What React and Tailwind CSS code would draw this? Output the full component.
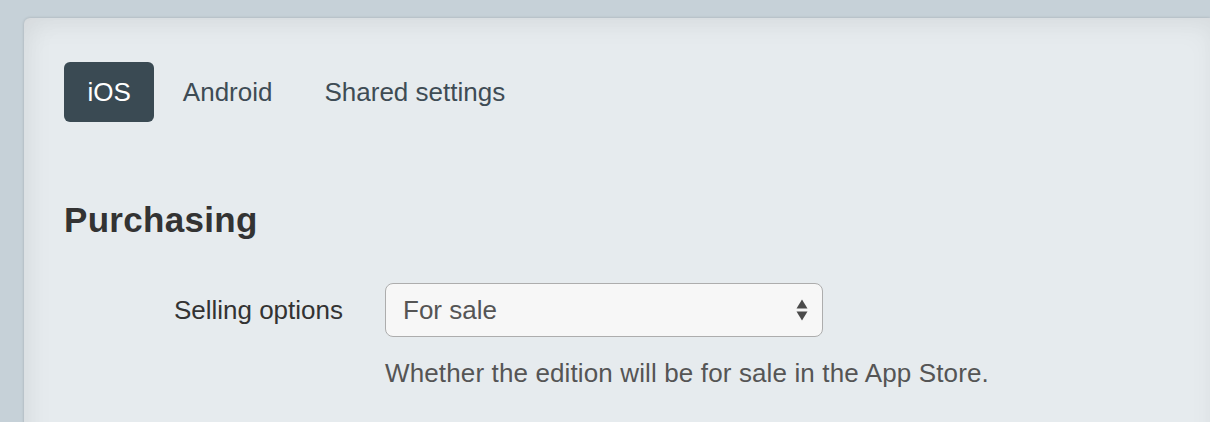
import { useState } from 'react';

const TABS = ['iOS', 'Android', 'Shared settings'];

function SelectArrows() {
  return (
    <svg width="12" height="22" viewBox="0 0 12 22" className="shrink-0">
      <path d="M6 0.5 L11.5 9.5 L0.5 9.5 Z" fill="#4a4a4a" />
      <path d="M6 21.5 L11.5 12.5 L0.5 12.5 Z" fill="#4a4a4a" />
    </svg>
  );
}

export default function App() {
  const [tab, setTab] = useState('iOS');

  return (
    <div
      className="h-[422px] w-[1210px] overflow-hidden bg-[#c6d1d8] pt-[18px] pl-[24px]"
      style={{ fontFamily: '"Liberation Sans", Arial, sans-serif' }}
    >
      <div className="h-[500px] rounded-tl-md bg-[#e6ebee] pl-[40px] pt-[44px] shadow-[0_0_3px_rgba(0,0,0,0.18),inset_0_10px_24px_rgba(0,0,0,0.045),inset_10px_0_24px_rgba(0,0,0,0.035)]">
        <div className="flex items-center gap-[5px]">
          {TABS.map((t) => (
            <button
              key={t}
              onClick={() => setTab(t)}
              className={
                'h-[60px] rounded-md px-[23.5px] text-[26px] leading-none ' +
                (tab === t ? 'bg-[#3a4a53] text-white' : 'text-[#3e4c55]')
              }
            >
              {t}
            </button>
          ))}
        </div>

        <h2 className="mt-[78px] text-[35px] font-bold leading-[40px] tracking-[0.3px] text-[#333]">Purchasing</h2>

        <div className="mt-[43px] flex">
          <label className="w-[279px] text-right text-[26px] leading-[54px] text-[#333]">Selling options</label>
          <div className="ml-[42px]">
            <div className="flex h-[54px] w-[438px] items-center justify-between rounded-[8px] border border-[#adadad] bg-[#f7f7f7] pl-[17px] pr-[14px]">
              <span className="text-[26px] text-[#555]">For sale</span>
              <SelectArrows />
            </div>
            <p className="mt-[21px] whitespace-nowrap text-[26px] leading-[30px] tracking-[0.13px] text-[#555]">
              Whether the edition will be for sale in the App Store.
            </p>
          </div>
        </div>
      </div>
    </div>
  );
}
